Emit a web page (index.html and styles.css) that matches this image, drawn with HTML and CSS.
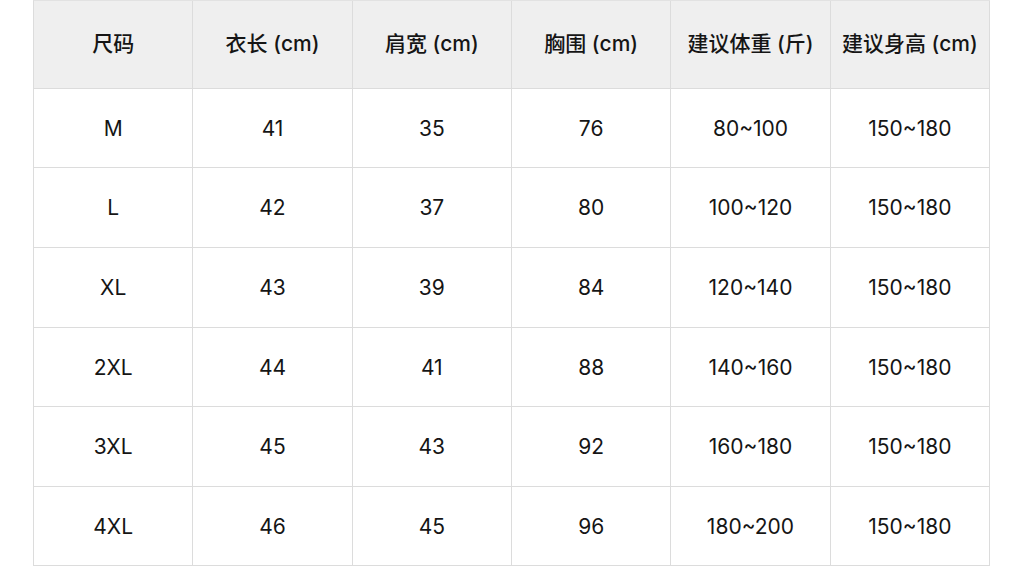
FILE: index.html
```html
<!DOCTYPE html>
<html lang="zh">
<head>
<meta charset="utf-8">
<title>尺码表</title>
<link rel="stylesheet" href="styles.css">
</head>
<body>
<div class="size-table">
  <div class="cell head">尺码</div>
  <div class="cell head">衣长 (cm)</div>
  <div class="cell head">肩宽 (cm)</div>
  <div class="cell head">胸围 (cm)</div>
  <div class="cell head">建议体重 (斤)</div>
  <div class="cell head">建议身高 (cm)</div>

  <div class="cell">M</div><div class="cell">41</div><div class="cell">35</div><div class="cell">76</div><div class="cell">80~100</div><div class="cell">150~180</div>
  <div class="cell">L</div><div class="cell">42</div><div class="cell">37</div><div class="cell">80</div><div class="cell">100~120</div><div class="cell">150~180</div>
  <div class="cell">XL</div><div class="cell">43</div><div class="cell">39</div><div class="cell">84</div><div class="cell">120~140</div><div class="cell">150~180</div>
  <div class="cell">2XL</div><div class="cell">44</div><div class="cell">41</div><div class="cell">88</div><div class="cell">140~160</div><div class="cell">150~180</div>
  <div class="cell">3XL</div><div class="cell">45</div><div class="cell">43</div><div class="cell">92</div><div class="cell">160~180</div><div class="cell">150~180</div>
  <div class="cell">4XL</div><div class="cell">46</div><div class="cell">45</div><div class="cell">96</div><div class="cell">180~200</div><div class="cell">150~180</div>
</div>
</body>
</html>
```
FILE: styles.css
```css
html, body {
  margin: 0;
  padding: 0;
  background: #ffffff;
}
body {
  font-family: "Inter", "Noto Sans CJK SC", sans-serif;
  color: #151515;
  font-size: 21px;
}
.size-table {
  margin-left: 33px;
  width: 957px;
  box-sizing: border-box;
  display: grid;
  grid-template-columns: repeat(6, 1fr);
  grid-template-rows: 88px 79px 80px 80px 79px 80px 79px;
  border-left: 1px solid #dcdcdc;
  border-top: 1px solid #e2e2e2;
}
.cell {
  box-sizing: border-box;
  border-right: 1px solid #dcdcdc;
  border-bottom: 1px solid #dcdcdc;
  display: flex;
  align-items: center;
  justify-content: center;
  white-space: nowrap;
}
.head {
  background: #efefef;
  font-weight: 500;
  padding-bottom: 5px;
}
```
